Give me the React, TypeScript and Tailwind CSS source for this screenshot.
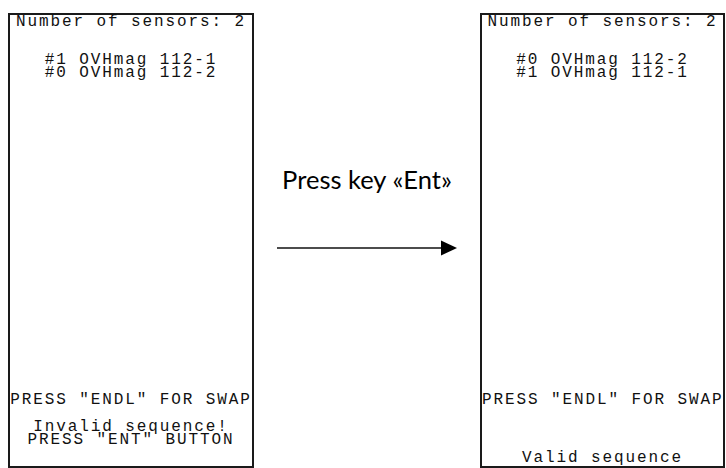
const lcd =
  "font-['Liberation_Mono',monospace] text-[16px] tracking-[1.9px] leading-[13px] text-[#111] whitespace-pre";

type PanelProps = {
  sensors: string[];
  message: string[];
  messagePad: string;
};

function LcdPanel({ sensors, message, messagePad }: PanelProps) {
  return (
    <div className={`flex h-[455px] flex-col border-2 border-[#1a1a1a] bg-white text-center ${lcd}`}>
      <div className="pt-px">Number of sensors: 2</div>
      {/* one block per group so the tight LCD rows stay together */}
      <div className="mt-[25px]">{sensors.join("\n")}</div>
      <div className="mt-auto">PRESS "ENDL" FOR SWAP</div>
      <div className={`h-[59px] ${messagePad}`}>{message.join("\n")}</div>
    </div>
  );
}

export default function App() {
  return (
    <div className="flex h-[468px] w-[726px] overflow-hidden bg-white pt-[13px] pl-[8px] pr-px">
      <div className="w-[246px] shrink-0">
        <LcdPanel
          sensors={["#1 OVHmag 112-1", "#0 OVHmag 112-2"]}
          message={["Invalid sequence!", 'PRESS "ENT" BUTTON']}
          messagePad="pt-[14px]"
        />
      </div>

      <div className="flex flex-1 flex-col items-center pt-[151px]">
        <p className="font-['Lato',sans-serif] text-[25.5px] leading-[30px] text-black">
          Press key «Ent»
        </p>
        <svg className="mt-[46px]" width="180" height="16" viewBox="0 0 180 16">
          <line x1="0" y1="8" x2="166" y2="8" stroke="#111" strokeWidth="1.5" />
          <polygon points="164,0.5 180,8 164,15.5" fill="#000" />
        </svg>
      </div>

      <div className="w-[245px] shrink-0">
        <LcdPanel
          sensors={["#0 OVHmag 112-2", "#1 OVHmag 112-1"]}
          message={["Valid sequence"]}
          messagePad="pt-[45px]"
        />
      </div>
    </div>
  );
}
